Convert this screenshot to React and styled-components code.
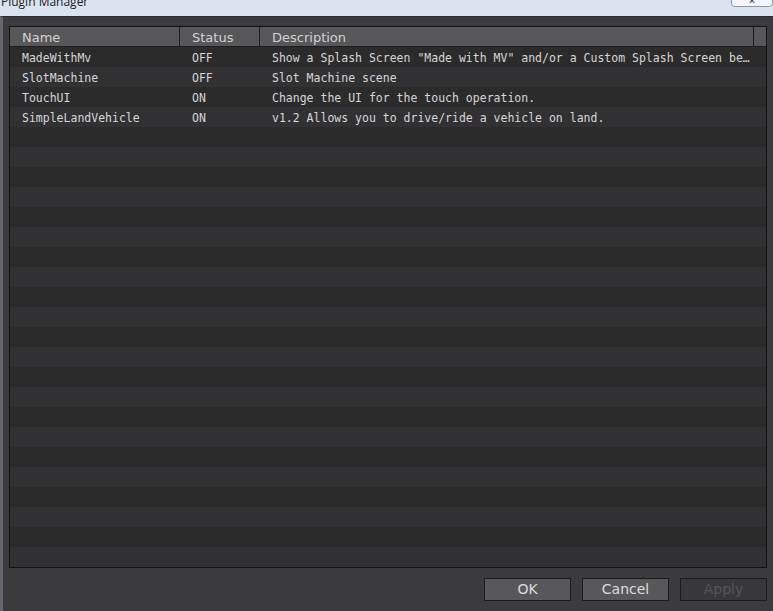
import React from 'react';
import styled, { createGlobalStyle } from 'styled-components';

const plugins = [
  { name: 'MadeWithMv', status: 'OFF', description: 'Show a Splash Screen "Made with MV" and/or a Custom Splash Screen before going to main screen.' },
  { name: 'SlotMachine', status: 'OFF', description: 'Slot Machine scene' },
  { name: 'TouchUI', status: 'ON', description: 'Change the UI for the touch operation.' },
  { name: 'SimpleLandVehicle', status: 'ON', description: 'v1.2 Allows you to drive/ride a vehicle on land.' },
];

const GlobalStyle = createGlobalStyle`
  html, body {
    margin: 0;
    padding: 0;
    background: #3b3b3d;
  }
  * {
    box-sizing: border-box;
  }
`;

export default function App() {
  return (
    <>
      <GlobalStyle />
      <Window>
        <TitleBar>
          <Title>Plugin Manager</Title>
          <CloseButton>✕</CloseButton>
        </TitleBar>
        <Dialog>
          <Table>
            <HeaderRow>
              <HeaderCell>Name</HeaderCell>
              <HeaderCell>Status</HeaderCell>
              <HeaderCell>Description</HeaderCell>
              <HeaderCell />
            </HeaderRow>
            <Body>
              {plugins.map((p) => (
                <Row key={p.name}>
                  <Cell>{p.name}</Cell>
                  <Cell>{p.status}</Cell>
                  <Cell>{p.description}</Cell>
                  <Cell />
                </Row>
              ))}
            </Body>
          </Table>
          <Footer>
            <Button>OK</Button>
            <Button>Cancel</Button>
            <Button disabled>Apply</Button>
          </Footer>
        </Dialog>
      </Window>
    </>
  );
}

const columns = '170px 80px 494px 1fr';

const Window = styled.div`
  width: 773px;
  height: 611px;
  display: flex;
  flex-direction: column;
  overflow: hidden;
`;

const TitleBar = styled.div`
  height: 16px;
  flex-shrink: 0;
  display: flex;
  justify-content: space-between;
  align-items: flex-start;
  background: #dae4f0;
  overflow: hidden;
`;

const Title = styled.div`
  font-family: 'Open Sans', 'Liberation Sans', sans-serif;
  font-size: 12px;
  line-height: 12px;
  color: #1a1a1a;
  margin-top: -4px;
  padding-left: 1px;
`;

const CloseButton = styled.div`
  width: 42px;
  height: 9px;
  margin-top: -2px;
  border: 1px solid #8b97a8;
  border-radius: 0 0 4px 4px;
  background: #f4f6f9;
  font-family: 'DejaVu Sans', sans-serif;
  font-size: 9px;
  line-height: 4px;
  text-align: center;
  color: #333;
  overflow: hidden;
`;

const Dialog = styled.div`
  flex: 1;
  display: flex;
  flex-direction: column;
  background: #3b3b3d;
  border-top: 1px solid #2b2b2e;
  border-left: 3px solid #66666f;
  padding: 9px 6px 10px 6px;
`;

const Table = styled.div`
  height: 542px;
  display: flex;
  flex-direction: column;
  border: 1px solid #141414;
  background: #2d2d2e;
`;

const HeaderRow = styled.div`
  display: grid;
  grid-template-columns: ${columns};
  height: 20px;
  background: #575759;
  border-bottom: 1px solid #1e1e1e;
`;

const HeaderCell = styled.div`
  font-family: 'DejaVu Sans', 'Open Sans', sans-serif;
  font-size: 13px;
  line-height: 21px;
  color: #d2d2d2;
  padding-left: 12px;
  border-right: 1px solid #1e1e1e;
  &:last-child {
    border-right: none;
  }
`;

const Body = styled.div`
  flex: 1;
  background: repeating-linear-gradient(
    to bottom,
    #2b2b2c 0px,
    #2b2b2c 20px,
    #313133 20px,
    #313133 40px
  );
`;

const Row = styled.div`
  display: grid;
  grid-template-columns: ${columns};
  height: 20px;
`;

const Cell = styled.div`
  font-family: 'DejaVu Sans Mono', 'Liberation Mono', monospace;
  font-size: 11.5px;
  line-height: 22px;
  color: #d6d6d6;
  padding-left: 12px;
  white-space: nowrap;
  overflow: hidden;
  text-overflow: ellipsis;
`;

const Footer = styled.div`
  display: flex;
  justify-content: flex-end;
  gap: 11px;
  margin-top: auto;
`;

const Button = styled.button`
  width: 87px;
  height: 23px;
  padding: 0;
  border: 1px solid #1c1c1c;
  background: ${(p) => (p.disabled ? '#38383a' : '#58585a')};
  color: ${(p) => (p.disabled ? '#555557' : '#dcdcdc')};
  font-family: 'DejaVu Sans', 'Open Sans', sans-serif;
  font-size: 14px;
  line-height: 21px;
`;
